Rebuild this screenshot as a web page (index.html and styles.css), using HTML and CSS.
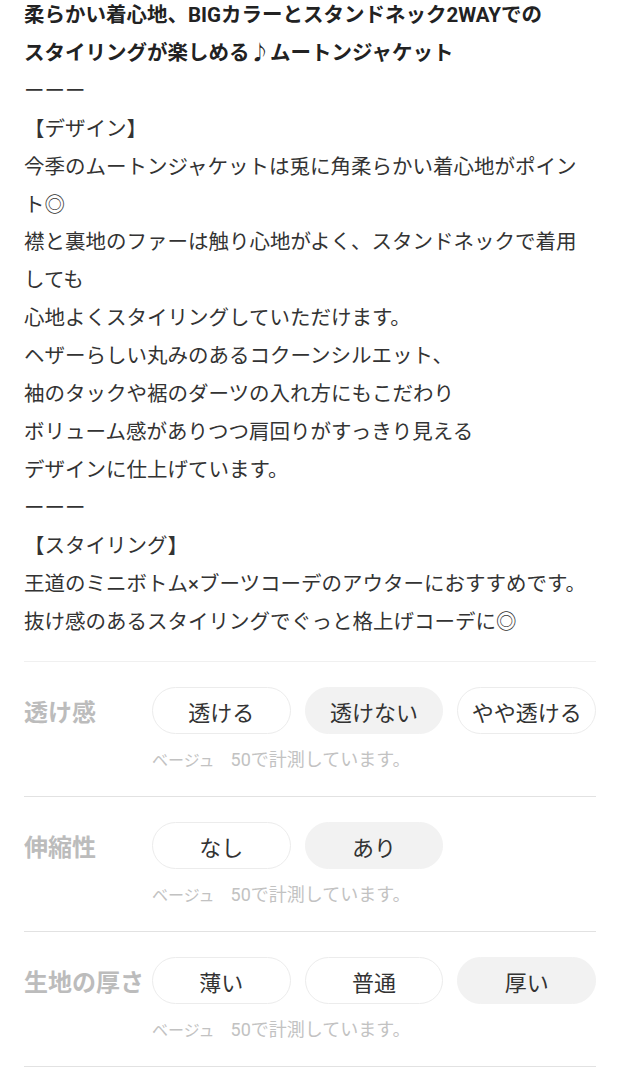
FILE: index.html
```html
<!DOCTYPE html>
<html lang="ja">
<head>
<meta charset="utf-8">
<title>商品説明</title>
<link rel="stylesheet" href="styles.css">
</head>
<body>
<main class="page">
  <div class="desc">
    <p class="title">柔らかい着心地、BIGカラーとスタンドネック2WAYでの<br>スタイリングが楽しめる♪ムートンジャケット</p>
    <p>ーーー</p>
    <p>【デザイン】</p>
    <p>今季のムートンジャケットは兎に角柔らかい着心地がポイント◎</p>
    <p>襟と裏地のファーは触り心地がよく、スタンドネックで着用しても</p>
    <p>心地よくスタイリングしていただけます。</p>
    <p>ヘザーらしい丸みのあるコクーンシルエット、</p>
    <p>袖のタックや裾のダーツの入れ方にもこだわり</p>
    <p>ボリューム感がありつつ肩回りがすっきり見える</p>
    <p>デザインに仕上げています。</p>
    <p>ーーー</p>
    <p>【スタイリング】</p>
    <p>王道のミニボトム×ブーツコーデのアウターにおすすめです。</p>
    <p>抜け感のあるスタイリングでぐっと格上げコーデに◎</p>
  </div>

  <section class="spec spec-first">
    <div class="spec-row">
      <div class="spec-label">透け感</div>
      <div class="options">
        <div class="opt">透ける</div>
        <div class="opt selected">透けない</div>
        <div class="opt">やや透ける</div>
      </div>
    </div>
    <p class="note"><span class="note-color">ベージュ　</span><span class="note-size">50で計測しています。</span></p>
  </section>

  <section class="spec">
    <div class="spec-row">
      <div class="spec-label">伸縮性</div>
      <div class="options">
        <div class="opt">なし</div>
        <div class="opt selected">あり</div>
      </div>
    </div>
    <p class="note"><span class="note-color">ベージュ　</span><span class="note-size">50で計測しています。</span></p>
  </section>

  <section class="spec spec-last">
    <div class="spec-row">
      <div class="spec-label">生地の厚さ</div>
      <div class="options">
        <div class="opt">薄い</div>
        <div class="opt">普通</div>
        <div class="opt selected">厚い</div>
      </div>
    </div>
    <p class="note"><span class="note-color">ベージュ　</span><span class="note-size">50で計測しています。</span></p>
  </section>
</main>
</body>
</html>
```

FILE: styles.css
```css
html, body {
  margin: 0;
  padding: 0;
  background: #ffffff;
}

body {
  font-family: Roboto, "Noto Sans CJK JP", sans-serif;
  color: #333333;
}

.page {
  padding: 0 24px;
}

.desc {
  margin-top: -3px;
  font-size: 20.5px;
  line-height: 37.9px;
  padding-bottom: 20px;
}

.desc p {
  margin: 0;
}

.desc .title {
  font-weight: 700;
  color: #222222;
}

.spec {
  border-top: 1px solid #e2e2e2;
  padding: 25px 0 24px;
}

.spec-first {
  border-top-color: #f0f0f0;
}

.spec-last {
  border-bottom: 1px solid #e2e2e2;
}

.spec-row {
  display: flex;
  align-items: flex-start;
  height: 47px;
}

.spec-label {
  flex: 0 0 128px;
  width: 128px;
  padding-top: 6px;
  font-size: 24px;
  font-weight: 700;
  color: #bcbcbc;
  white-space: nowrap;
  line-height: 41px;
}

.options {
  flex: 1;
  display: grid;
  grid-template-columns: repeat(3, 1fr);
  column-gap: 14px;
}

.opt {
  height: 47px;
  box-sizing: border-box;
  border: 1px solid #ececec;
  border-radius: 24px;
  background: #ffffff;
  display: flex;
  align-items: center;
  justify-content: center;
  font-size: 22px;
  color: #333333;
  white-space: nowrap;
}

.opt.selected {
  background: #f2f2f2;
  border-color: #f2f2f2;
}

.note {
  margin: 14px 0 0 128px;
  height: 24px;
  font-size: 15px;
  line-height: 24px;
  color: #c2c2c2;
  white-space: nowrap;
}

.note-color {
  font-size: 16px;
}

.note-size {
  font-size: 18px;
}
```
